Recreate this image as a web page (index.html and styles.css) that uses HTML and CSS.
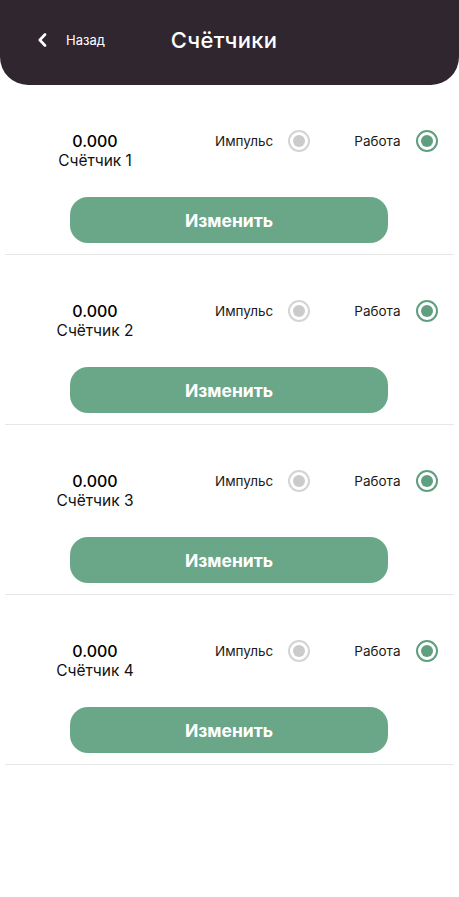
FILE: index.html
```html
<!DOCTYPE html>
<html lang="ru">
<head>
<meta charset="utf-8">
<title>Счётчики</title>
<link rel="stylesheet" href="styles.css">
</head>
<body>
<header class="topbar">
  <a class="back" href="#">
    <svg class="back-icon" width="12" height="14" viewBox="0 0 12 14"><path d="M8 1.5 L2.8 7 L8 12.5" fill="none" stroke="#fff" stroke-width="2.6" stroke-linecap="round" stroke-linejoin="round"/></svg>
    <span>Назад</span>
  </a>
  <h1 class="title">Счётчики</h1>
</header>

<main class="list">
  <section class="meter">
    <div class="meter-row">
      <div class="meter-info">
        <div class="meter-value">0.000</div>
        <div class="meter-name">Счётчик 1</div>
      </div>
      <div class="option option-first"><span>Импульс</span><span class="radio"></span></div>
      <div class="option option-second"><span>Работа</span><span class="radio radio-on"></span></div>
    </div>
    <button class="edit">Изменить</button>
  </section>
  <section class="meter">
    <div class="meter-row">
      <div class="meter-info">
        <div class="meter-value">0.000</div>
        <div class="meter-name">Счётчик 2</div>
      </div>
      <div class="option option-first"><span>Импульс</span><span class="radio"></span></div>
      <div class="option option-second"><span>Работа</span><span class="radio radio-on"></span></div>
    </div>
    <button class="edit">Изменить</button>
  </section>
  <section class="meter">
    <div class="meter-row">
      <div class="meter-info">
        <div class="meter-value">0.000</div>
        <div class="meter-name">Счётчик 3</div>
      </div>
      <div class="option option-first"><span>Импульс</span><span class="radio"></span></div>
      <div class="option option-second"><span>Работа</span><span class="radio radio-on"></span></div>
    </div>
    <button class="edit">Изменить</button>
  </section>
  <section class="meter">
    <div class="meter-row">
      <div class="meter-info">
        <div class="meter-value">0.000</div>
        <div class="meter-name">Счётчик 4</div>
      </div>
      <div class="option option-first"><span>Импульс</span><span class="radio"></span></div>
      <div class="option option-second"><span>Работа</span><span class="radio radio-on"></span></div>
    </div>
    <button class="edit">Изменить</button>
  </section>
</main>
</body>
</html>
```
FILE: styles.css
```css
* { box-sizing: border-box; }

body {
  margin: 0;
  background: #fff;
  font-family: Inter, "Noto Sans", sans-serif;
  color: #111;
}

.topbar {
  height: 85px;
  background: #30262f;
  border-radius: 0 0 28px 28px;
  display: flex;
  align-items: center;
  padding: 0 0 5px 37px;
}

.back {
  display: flex;
  align-items: center;
  gap: 17px;
  color: #fff;
  text-decoration: none;
  font-size: 13px;
}

.title {
  margin: 0 0 0 66px;
  color: #fff;
  font-size: 22px;
  font-weight: 500;
  letter-spacing: 0.3px;
}

.list {
  padding: 0 5px;
}

.meter {
  padding-top: 46px;
  border-bottom: 1.5px solid #e6e6e6;
  padding-bottom: 11px;
}

.meter-row {
  display: flex;
  align-items: flex-start;
  height: 40px;
}

.meter-info {
  width: 100px;
  margin-left: 40px;
  text-align: center;
}

.meter-value {
  font-size: 16px;
  font-weight: 500;
  line-height: 20px;
  color: #000;
}

.meter-name {
  font-size: 15.5px;
  line-height: 19px;
  color: #111;
}

.option {
  display: flex;
  align-items: center;
  gap: 15px;
  height: 20px;
  font-size: 13.5px;
  color: #1a1a1a;
}

.option-first { margin-left: 70px; }
.option-second { margin-left: 44px; }
.option-second .radio { margin-left: 1px; }

.radio {
  width: 22px;
  height: 22px;
  border-radius: 50%;
  border: 2px solid #d4d4d4;
  display: flex;
  align-items: center;
  justify-content: center;
}

.radio::after {
  content: "";
  width: 12px;
  height: 12px;
  border-radius: 50%;
  background: #cbcbcb;
}

.radio-on { border-color: #5f9f80; }
.radio-on::after { background: #5f9f80; }

.edit {
  display: block;
  margin: 26px 0 0 65px;
  width: 318px;
  height: 46px;
  border: none;
  border-radius: 18px;
  background: #6aa688;
  color: #fff;
  font-family: Inter, "Noto Sans", sans-serif;
  font-size: 17.5px;
  font-weight: 700;
}
```
